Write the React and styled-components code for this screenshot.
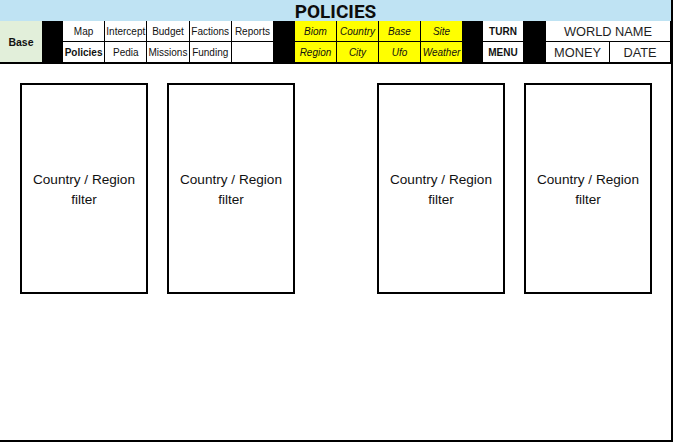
import React from "react";
import styled, { createGlobalStyle } from "styled-components";

const GlobalStyle = createGlobalStyle`
  body {
    margin: 0;
    background: #fff;
    font-family: "Liberation Sans", Arial, sans-serif;
    color: #111;
  }
`;

const Sheet = styled.div`
  width: 673px;
  height: 442px;
  box-sizing: border-box;
  border-right: 2px solid #000;
  border-bottom: 2px solid #000;
  display: flex;
  flex-direction: column;
  overflow: hidden;
`;

const TitleBar = styled.h1`
  margin: 0;
  height: 21px;
  background: #bfe3f3;
  font: 700 19px/23px Roboto, "Liberation Sans", sans-serif;
  text-align: center;
  color: #0d0d0d;
`;

const Toolbar = styled.div`
  display: grid;
  grid-template-columns: 42px 21px 210px 22px 167px 21px 40px 23px 1fr;
  height: 41px;
  border-bottom: 2px solid #000;
`;

const BaseCell = styled.div`
  background: #e2efda;
  display: flex;
  align-items: center;
  justify-content: center;
  font-weight: 700;
  font-size: 10.5px;
`;

const Filler = styled.div`
  background: #000;
`;

const CellGrid = styled.div`
  display: grid;
  grid-template-columns: ${(p) => p.$cols};
  grid-template-rows: 20px 20px;
  gap: 1px;
  background: #000;
  padding-right: ${(p) => (p.$edge ? "1px" : "0")};
`;

const Cell = styled.div`
  background: ${(p) => (p.$yellow ? "#ffff00" : "#fff")};
  display: flex;
  align-items: center;
  justify-content: center;
  white-space: nowrap;
  font-size: ${(p) => p.$size || "10px"};
  font-weight: ${(p) => (p.$bold ? 700 : 400)};
  font-style: ${(p) => (p.$yellow ? "italic" : "normal")};
  grid-column: ${(p) => (p.$span ? "1 / -1" : "auto")};
  color: ${(p) => (p.$big ? "#1f1f1f" : "#111")};
`;

const Board = styled.div`
  display: flex;
  gap: 82px;
  padding: 19px 0 0 20px;
`;

const Group = styled.div`
  display: flex;
  gap: 19px;
`;

const FilterBox = styled.div`
  width: 128px;
  height: 211px;
  box-sizing: border-box;
  border: 2px solid #000;
  display: flex;
  align-items: center;
  justify-content: center;
  text-align: center;
  font-size: 13.6px;
  line-height: 20px;
  padding-top: 2px;
`;

const navTop = ["Map", "Intercept", "Budget", "Factions", "Reports"];
const navBottom = ["Policies", "Pedia", "Missions", "Funding", ""];
const filtersTop = ["Biom", "Country", "Base", "Site"];
const filtersBottom = ["Region", "City", "Ufo", "Weather"];

function Box() {
  return (
    <FilterBox>
      Country / Region
      <br />
      filter
    </FilterBox>
  );
}

export default function App() {
  return (
    <>
      <GlobalStyle />
      <Sheet>
        <TitleBar>POLICIES</TitleBar>
        <Toolbar>
          <BaseCell>Base</BaseCell>
          <Filler />
          <CellGrid $cols="repeat(5, 1fr)">
            {navTop.map((n) => (
              <Cell key={n}>{n}</Cell>
            ))}
            {navBottom.map((n, i) => (
              <Cell key={"b" + i} $bold={n === "Policies"}>
                {n}
              </Cell>
            ))}
          </CellGrid>
          <Filler />
          <CellGrid $cols="repeat(4, 1fr)">
            {[...filtersTop, ...filtersBottom].map((f) => (
              <Cell key={f} $yellow $size="10px">
                {f}
              </Cell>
            ))}
          </CellGrid>
          <Filler />
          <CellGrid $cols="1fr">
            <Cell $bold $size="10px">TURN</Cell>
            <Cell $bold $size="10px">MENU</Cell>
          </CellGrid>
          <Filler />
          <CellGrid $cols="63px 1fr" $edge>
            <Cell $span $big $size="12.8px">WORLD NAME</Cell>
            <Cell $big $size="12.8px">MONEY</Cell>
            <Cell $big $size="12.8px">DATE</Cell>
          </CellGrid>
        </Toolbar>
        <Board>
          <Group>
            <Box />
            <Box />
          </Group>
          <Group>
            <Box />
            <Box />
          </Group>
        </Board>
      </Sheet>
    </>
  );
}
